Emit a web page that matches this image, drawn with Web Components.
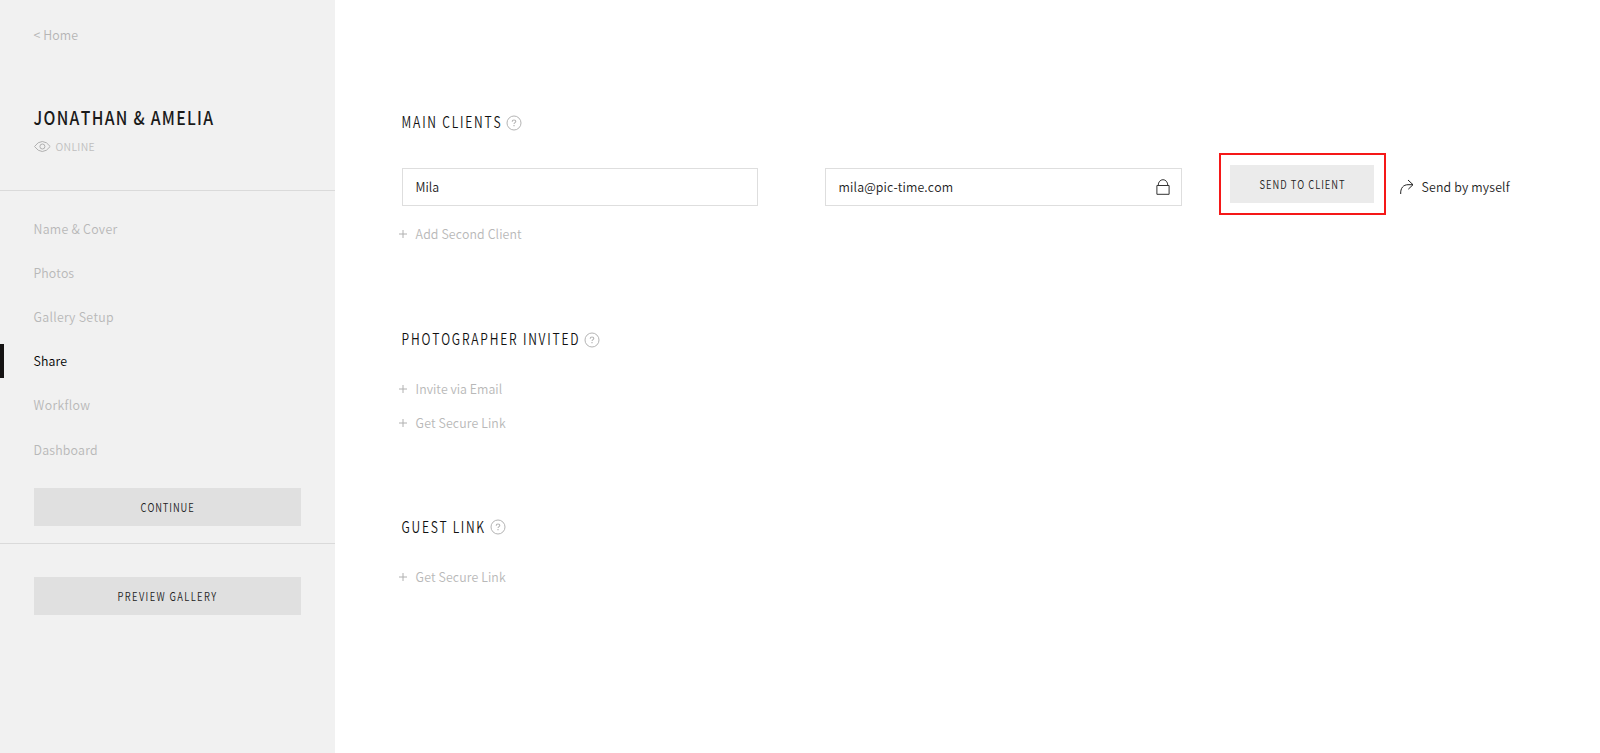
<!DOCTYPE html>
<html lang="en"><head><meta charset="utf-8"><title>Share gallery</title>
<style>
html,body{margin:0;height:100%;background:#fff;overflow:hidden}
body{font-family:"Noto Sans CJK SC","Open Sans",sans-serif;color:#111}
</style></head><body>
<share-page></share-page>
<script>
const define=(name,html,setup)=>{
  const t=document.createElement('template');t.innerHTML=html;
  customElements.define(name,class extends HTMLElement{
    connectedCallback(){
      if(this.shadowRoot)return;
      this.attachShadow({mode:'open'}).append(t.content.cloneNode(true));
      if(setup)setup.call(this,this.shadowRoot);
    }
  });
};
// One line of tracked text: "w" is its measure, "size" the font size, "sx" the glyph condensing.
define('tracked-text',`<style>:host{display:inline-block;height:20px;line-height:20px;white-space:nowrap;flex:none}
span{display:inline-block;transform-origin:0 50%;white-space:pre}</style><span></span>`,function(r){
  const s=r.querySelector('span'),w=+this.getAttribute('w'),sx=+(this.getAttribute('sx')||.95);
  const text=this.getAttribute('text');
  s.textContent=text;
  this.style.width=w+'px';
  s.style.fontSize=this.getAttribute('size')+'px';
  s.style.fontWeight=this.getAttribute('weight')||350;
  s.style.fontKerning='none';
  const natural=s.getBoundingClientRect().width;
  s.style.letterSpacing=(w/sx-natural)/(text.length-1)+'px';
  s.style.transform='translate(-.4px,-2.400px) scaleX('+sx+')';
});
define('help-badge',`<style>:host{display:block;width:16px;height:16px;flex:none}svg{display:block}</style>
<svg width="16" height="16" viewBox="0 0 16 16" fill="none" stroke="#b4b4b4"><circle cx="8" cy="8" r="7" stroke-width="1"/><path d="M6.200 6.700C6.200 5.500 7 5 8 5s1.800.6 1.800 1.500C9.800 7.600 8 7.600 8 9" stroke-width="1.100"/><path d="M8 10v1.200" stroke-width="1.200"/></svg>`);
define('section-title',`<style>:host{display:flex;height:20px;align-items:flex-start}help-badge{margin:1.700px 0 0 5px}</style><slot></slot><help-badge></help-badge>`);
define('add-link',`<style>:host{display:flex;height:20px;color:#b8b8b8;margin-left:-3px}svg{display:block;margin:6px 8.500px 0 0;flex:none}</style>
<svg width="8" height="8" viewBox="0 0 8 8" stroke="#b0b0b0" stroke-width="1"><path d="M4 0v8M0 4h8"/></svg><slot></slot>`);
define('nav-item',`<style>:host{display:flex;align-items:center;height:44.100px;padding-left:34px;color:#b8b8b8;box-sizing:border-box}
:host([active]){color:#000;background:linear-gradient(#151313,#151313) 0 50%/4px 34px no-repeat}</style><slot></slot>`);
define('flat-button',`<style>:host{display:flex;align-items:center;justify-content:center;height:38px;background:#e0e0e0;color:#222}</style><slot></slot>`);
define('text-field',`<style>:host{display:flex;box-sizing:border-box;height:38px;border:1px solid #dedede;padding:0 11px 0 12.500px;justify-content:space-between;align-items:center;color:#222;flex:none}</style><slot></slot>`);
define('side-bar',`<style>:host{display:block;width:335px;background:#f1f1f1;flex:none}
.home{padding:23px 0 0 34px;height:20px;color:#b5b5b5}
.title{padding:56px 0 0 34px;margin-top:9px;height:20px;color:#1a1a1a}
.state{display:flex;padding:9px 0 0 34px;height:32px;margin-top:-1px;gap:5px;color:#bfbfbf}
.state svg{margin-top:2px;display:block}
.head{height:190px;display:flow-root;border-bottom:1px solid #dadada}
nav{padding-top:16px;display:flow-root}
flat-button{width:267px;margin-left:34px}
.go{margin-top:16.500px;padding-bottom:16.500px;border-bottom:1px solid #dadada}
.pre{margin-top:33.500px}
</style>
<div class="head">
<div class="home"><tracked-text text="&lt; Home" w="44.500" size="13"></tracked-text></div>
<div class="title"><tracked-text text="JONATHAN &amp; AMELIA" w="179.500" size="19" weight="500" sx=".83"></tracked-text></div>
<div class="state"><svg width="17" height="17" viewBox="0 0 17 17" fill="none" stroke="#b0b0b0" stroke-width="1"><path d="M.5 8.500Q4 3.500 8.300 3.500T16.200 8.500Q12.500 13.500 8.300 13.500T.5 8.500Z"/><circle cx="8.400" cy="8.500" r="2.500"/></svg><tracked-text text="ONLINE" w="39" size="11"></tracked-text></div>
</div>
<nav>
<nav-item><tracked-text text="Name &amp; Cover" w="83.500" size="13"></tracked-text></nav-item>
<nav-item><tracked-text text="Photos" w="40.500" size="13"></tracked-text></nav-item>
<nav-item><tracked-text text="Gallery Setup" w="80" size="13"></tracked-text></nav-item>
<nav-item active><tracked-text text="Share" w="33.500" size="13"></tracked-text></nav-item>
<nav-item><tracked-text text="Workflow" w="56.500" size="13"></tracked-text></nav-item>
<nav-item><tracked-text text="Dashboard" w="64" size="13"></tracked-text></nav-item>
</nav>
<div class="go"><flat-button><tracked-text text="CONTINUE" w="53" size="12" sx=".78"></tracked-text></flat-button></div>
<div class="pre"><flat-button><tracked-text text="PREVIEW GALLERY" w="98.500" size="12" sx=".78"></tracked-text></flat-button></div>`);
define('client-row',`<style>:host{display:flex;margin-top:20px;height:62px;align-items:center}
.mail{margin-left:67px}.mark{box-sizing:border-box;width:167px;height:62px;border:2px solid #f51818;margin-left:36.500px;display:flex;align-items:center;justify-content:center;flex:none}
flat-button{width:144px;background:#ebebeb}
.self{display:flex;margin:6px 0 0 14px;gap:8px;align-items:center;color:#222}
text-field{margin-top:6px}svg{display:block}.mail svg{margin-top:-1px}
</style>
<text-field style="width:356px"><tracked-text text="Mila" w="23.500" size="13"></tracked-text></text-field>
<text-field class="mail" style="width:357px"><tracked-text text="mila@pic-time.com" w="114.500" size="13"></tracked-text>
<svg width="14" height="16" viewBox="0 0 14 16" fill="none" stroke="#333" stroke-width="1"><path d="M.9 6.500h12.200v8.800H.9zM2.200 6.500C2.200 3 4.300.7 7 .7s4.800 2.300 4.800 5.800"/></svg></text-field>
<div class="mark"><flat-button><tracked-text text="SEND TO CLIENT" w="85" size="12" sx=".78"></tracked-text></flat-button></div>
<div class="self"><svg width="14" height="16" viewBox="0 0 14 16" fill="none" stroke="#222" stroke-width="1"><path d="M.7 15C.3 9 3.500 5.700 8 5.700h5M8 1l5 4.700-4.700 4.500"/></svg><tracked-text text="Send by myself" w="88" size="13"></tracked-text></div>`);
define('share-page',`<style>:host{display:flex;height:100vh}
main{flex:1;padding:113px 0 0 67px;min-width:0}
.a1{margin-top:9px}.t2{margin-top:86px}.a2{margin-top:28.500px}.a3{margin-top:14px}.t3{margin-top:85px}.a4{margin-top:29.500px}
</style>
<side-bar></side-bar><main>
<section-title><tracked-text text="MAIN CLIENTS" w="99" size="15.500" sx=".78"></tracked-text></section-title>
<client-row></client-row>
<add-link class="a1"><tracked-text text="Add Second Client" w="106" size="13"></tracked-text></add-link>
<section-title class="t2"><tracked-text text="PHOTOGRAPHER INVITED" w="177" size="15.500" sx=".78"></tracked-text></section-title>
<add-link class="a2"><tracked-text text="Invite via Email" w="86.500" size="13"></tracked-text></add-link>
<add-link class="a3"><tracked-text text="Get Secure Link" w="90" size="13"></tracked-text></add-link>
<section-title class="t3"><tracked-text text="GUEST LINK" w="82.500" size="15.500" sx=".78"></tracked-text></section-title>
<add-link class="a4"><tracked-text text="Get Secure Link" w="90" size="13"></tracked-text></add-link>
</main>`);
</script></body></html>
